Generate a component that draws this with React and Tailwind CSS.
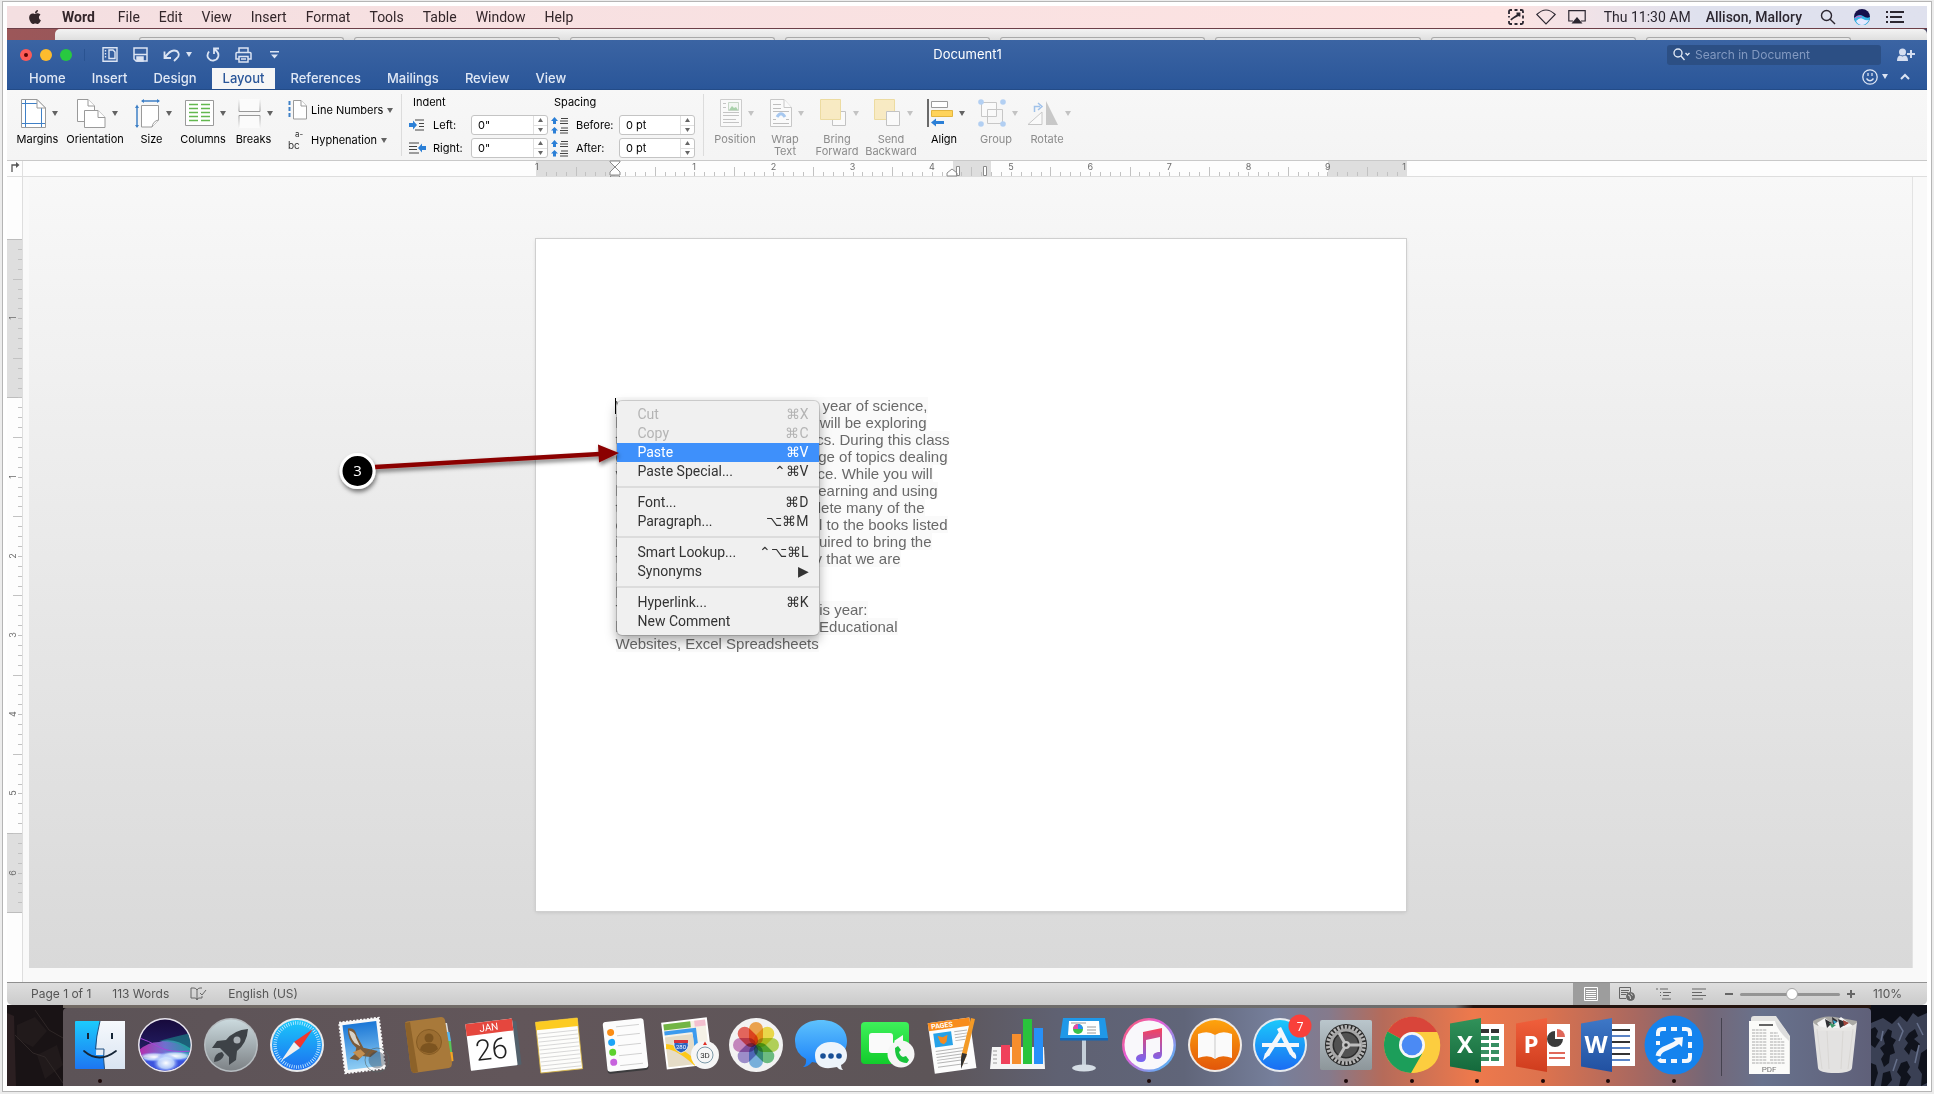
import React, { useState } from 'react';
import { FaApple } from 'react-icons/fa';

const menus = ['File', 'Edit', 'View', 'Insert', 'Format', 'Tools', 'Table', 'Window', 'Help'];
const ribbonTabs = ['Home', 'Insert', 'Design', 'Layout', 'References', 'Mailings', 'Review', 'View'];

const INCH = 79;

/* ── Menu bar ── */
const MenuBar = () => (
  <header className="flex h-[23px] items-center justify-between border-b border-[#6d3f48] bg-linear-to-r from-[#f4dfe1] via-[#fde3e2] via-78% to-[#dfe1ee] to-88% pr-[23px] pl-5 font-[Roboto,sans-serif] text-sm text-[#33262a]">
    <nav className="flex items-center gap-[19px]">
      <FaApple className="mb-px h-4 w-4" />
      <a href="#word" className="pr-1 font-bold">Word</a>
      {menus.map(m => <a key={m} href={`#${m}`}>{m}</a>)}
    </nav>
    <div className="flex items-center gap-3 text-[#2b2630]">
      <svg width="16" height="16" viewBox="0 0 16 16" fill="none" stroke="currentColor" strokeWidth="1.8">
        <path d="M1 5V2.500Q1 1 2.500 1H4M6.500 1h3M12 1h1.500Q15 1 15 2.500V4M15 6.500v3M15 12v1.500q0 1.500-1.500 1.500H12M9.500 15h-3M4 15H2.500Q1 15 1 13.500V12M1 7v1.500" />
        <path d="M3 11c1-2 5-3 8-6M8.500 4.500h3v3" />
      </svg>
      <svg width="20" height="16" viewBox="0 0 20 16" fill="none" stroke="currentColor" strokeWidth="1.100">
        <path d="M.8 5.500Q10-3.500 19.200 5.500L10 15z" />
      </svg>
      <svg width="18" height="16" viewBox="0 0 18 16" fill="none" stroke="currentColor" strokeWidth="1.200">
        <path d="M5 12H.8V1.600h16.400V12H13" />
        <path d="M9 8l5.500 6.500h-11z" fill="currentColor" stroke="none" />
      </svg>
      <span className="pl-[6px]">Thu 11:30 AM</span>
      <span className="pr-[6px] pl-[3px] font-medium">Allison, Mallory</span>
      <svg width="16" height="16" viewBox="0 0 16 16" fill="none" stroke="currentColor" strokeWidth="1.400">
        <circle cx="6.500" cy="6.500" r="5" /><path d="M10.200 10.200L15 15" />
      </svg>
      <svg width="26" height="16" viewBox="-6 0 26 16">
        <circle cx="8" cy="8" r="8" fill="#15104a" />
        <path d="M0 9q5-5 9-2t7 1a8 8 0 0 1-16 1z" fill="#37b7e6" />
        <path d="M2 12q4-4 7-2t6 1q-3 5-7 5t-6-4z" fill="#e6e8ff" />
        <path d="M1 9q3-3 7-1" stroke="#e255c8" fill="none" />
      </svg>
      <svg width="18" height="14" viewBox="0 0 18 14" stroke="currentColor" strokeWidth="1.800">
        <path d="M0 2h2M4 2h14M0 7h2M4 7h12M0 12h2M4 12h14" />
      </svg>
    </div>
  </header>
);

/* ── Title bar ── */
const TitleBar = () => (
  <div className="grid h-7 grid-cols-[1fr_auto_1fr] items-center pt-px pr-3 pl-[13px] text-white">
    <div className="flex items-center text-[#dbe4f3]">
      <div className="flex gap-2 border-r border-[#2a5391] pr-3">
        <button aria-label="Close" className="flex h-3 w-3 items-center justify-center rounded-full bg-[#fc5b57]"><span className="h-1 w-1 rounded-full bg-[#5a0503]" /></button>
        <button aria-label="Minimize" className="h-3 w-3 rounded-full bg-[#fdbc2e]" />
        <button aria-label="Zoom" className="h-3 w-3 rounded-full bg-[#28c940]" />
      </div>
      <button aria-label="Templates" className="ml-[17px]">
        <svg width="16" height="15" viewBox="0 0 16 15" fill="none" stroke="currentColor" strokeWidth="1.400">
          <path d="M1 .8h14v13.400H1zM7 3h4l2 2v6.500H7z" /><path d="M3.500 3v8" strokeDasharray="1.500 1.500" />
        </svg>
      </button>
      <button aria-label="Save" className="ml-[15px]">
        <svg width="15" height="15" viewBox="0 0 15 15" fill="none" stroke="currentColor" strokeWidth="1.500">
          <path d="M1 1h13v13H3l-2-2z" /><path d="M1 7.500h13" /><path d="M4 14v-4h6v4z" fill="currentColor" />
        </svg>
      </button>
      <button aria-label="Undo" className="ml-[15px]">
        <svg width="17" height="14" viewBox="0 0 17 14" fill="none" stroke="currentColor" strokeWidth="1.800">
          <path d="M1.500 3.500V10h6.500M2 9.500C5 5 8 2.500 11 2.500c5 0 6 5 3 7.500l-3 3" />
        </svg>
      </button>
      <Caret light className="ml-[6px]" />
      <button aria-label="Repeat" className="ml-[14px]">
        <svg width="14" height="15" viewBox="0 0 14 15" fill="none" stroke="currentColor" strokeWidth="1.800">
          <path d="M3 4.500C-1 10 4 14 7.500 13.500c5-.8 6.500-6 3-9.500L8.500 2.500M8 7V1.500h5" />
        </svg>
      </button>
      <button aria-label="Print" className="ml-[15px]">
        <svg width="17" height="16" viewBox="0 0 17 16" fill="none" stroke="currentColor" strokeWidth="1.500">
          <path d="M4 5V1h9v4M3.500 12H1V6.500q0-1 1-1h13q1 0 1 1V12h-2.500M4 9.500h9V15H4zM6 12h5" />
        </svg>
      </button>
      <button aria-label="Customize toolbar" className="ml-[18px]">
        <svg width="9" height="8" viewBox="0 0 9 8" fill="currentColor"><path d="M0 0h9v1.400H0zM1 3.500h7L4.500 7.500z" /></svg>
      </button>
    </div>
    <h1 className="pt-px text-[13px]">Document1</h1>
    <div className="flex items-center justify-end">
      <div className="flex h-5 w-[214px] items-center gap-1 rounded-[3px] bg-[#2c4f84] pl-[6px]">
        <svg width="18" height="13" viewBox="0 0 18 13" fill="none" stroke="#dfe7f4" strokeWidth="1.400">
          <circle cx="5" cy="5" r="4" /><path d="M8 8l3.500 4M12.500 5l2 2 2-2" />
        </svg>
        <input type="text" aria-label="Search in Document" placeholder="Search in Document" className="min-w-0 flex-1 bg-transparent text-xs text-white outline-none placeholder:text-[#8299c1]" />
      </div>
      <button aria-label="Share" className="ml-4">
        <svg width="18" height="14" viewBox="0 0 18 14" fill="#d5def0">
          <circle cx="5.500" cy="4" r="3.500" /><path d="M0 13q0-5 3-5.500l2.500 1L8 7.500q3 .5 3 5.500zM13 2h2v3h3v2h-3v3h-2V7h-3V5h3z" />
        </svg>
      </button>
    </div>
  </div>
);

const Caret = ({ light, faded, className = '' }) => (
  <svg width="6" height="5" viewBox="0 0 6 5" className={`shrink-0 ${className}`}>
    <path d="M0 0h6L3 5z" fill={light ? '#dbe4f3' : faded ? '#c3c3c3' : '#636363'} />
  </svg>
);

const TabRow = ({ tab, setTab }) => (
  <div className="flex h-[21px] justify-between pr-[17px] pl-[11px]">
    <nav className="flex gap-1">
      {ribbonTabs.map(t => (
        <button key={t} onClick={() => setTab(t)}
          className={t === tab ? 'bg-[#f6f6f6] px-[11px] text-[13px] font-medium text-[#2a5699]' : 'px-[11px] text-[13px] font-medium text-[#e0e8f5]'}>
          {t}
        </button>
      ))}
    </nav>
    <div className="flex items-center pb-1">
      <button aria-label="Feedback">
        <svg width="16" height="16" viewBox="0 0 16 16" fill="none" stroke="#dbe4f3" strokeWidth="1.300">
          <circle cx="8" cy="8" r="7.200" /><path d="M6 4v3M10 4v3M4.500 9.500q3.500 4.500 7 0" />
        </svg>
      </button>
      <Caret light className="ml-1" />
      <button aria-label="Collapse ribbon" className="ml-3">
        <svg width="10" height="7" viewBox="0 0 10 7" fill="none" stroke="#dbe4f3" strokeWidth="2"><path d="M1 6l4-4 4 4" /></svg>
      </button>
    </div>
  </div>
);

/* ── Ribbon icons ── */
const g = { fill: '#fff', stroke: '#9a9a9a', strokeWidth: 1 };

const ribbonIcons = {
  Margins: (
    <svg width="25" height="29" viewBox="0 0 25 29"><path d="M.5.500H16L24.500 9v19.500H.5z" {...g} /><path d="M4.500 1v27M20.500 9v19M1 4.500h15M1 24.500h23" stroke="#3f80c6" fill="none" /><path d="M16 .5V9h8.500z" {...g} /></svg>
  ),
  Orientation: (
    <svg width="29" height="29" viewBox="0 0 29 29"><path d="M.5.500H11L17.500 7v15.500H.5z" {...g} /><path d="M11 .5V7h6.500" {...g} />
      <path d="M7.500 11.500H21l7 7v10H7.500z" {...g} /><path d="M21 11.500v7h7" {...g} /></svg>
  ),
  Size: (
    <svg width="25" height="29" viewBox="0 0 25 29"><path d="M6.500 6.500h17V21l-6.500 7H6.500z" {...g} /><path d="M17 28q1-6 6.500-7" {...g} />
      <path d="M7 2h17M2 7v21" stroke="#3f80c6" strokeWidth="1.500" /><path d="M9 0v4L6 2zM22 0v4l3-2zM0 9h4L2 5.500zM0 26h4l-2 3z" fill="#3f80c6" /></svg>
  ),
  Columns: (
    <svg width="29" height="26" viewBox="0 0 29 26"><path d="M.5.500h28v25H.5z" {...g} />
      <path d="M4 4.500h9M4 8.500h9M4 12.500h9M4 16.500h9M4 20.500h9M16 4.500h9M16 8.500h9M16 12.500h9M16 16.500h9M16 20.500h9" stroke="#63b84f" strokeWidth="1.400" /></svg>
  ),
  Breaks: (
    <svg width="23" height="29" viewBox="0 0 23 29">
      <defs>
        <linearGradient id="fadeUp" x1="0" y1="0" x2="0" y2="1"><stop offset="0" stopColor="#999" stopOpacity="0" /><stop offset="1" stopColor="#999" /></linearGradient>
        <linearGradient id="fadeDown" x1="0" y1="0" x2="0" y2="1"><stop offset="0" stopColor="#999" /><stop offset="1" stopColor="#999" stopOpacity="0" /></linearGradient>
      </defs>
      <path d="M1 0v12.500h21V0" fill="#fbfbfb" stroke="url(#fadeUp)" /><path d="M1 29V16.500h21V29" fill="#fbfbfb" stroke="url(#fadeDown)" />
    </svg>
  ),
  Position: (
    <svg width="22" height="28" viewBox="0 0 22 28" opacity=".45"><path d="M.5.500h21v27H.5z" {...g} /><path d="M8.500 3.500h10v8h-10z" fill="#eef6ee" stroke="#8fb08f" /><path d="M9 11l3-4 2 2 2-1 2 3z" fill="#4ca650" />
      <path d="M3 4.500h3M3 8.500h3M3 13.500h16M3 16.500h16M3 20.500h13M3 23.500h16" stroke="#888" /></svg>
  ),
  Wrap: (
    <svg width="22" height="28" viewBox="0 0 22 28" opacity=".5"><path d="M.5.500H14l7.500 8v19H.5z" {...g} /><path d="M14 .5v8h7.500" {...g} />
      <path d="M3 5.500h8M3 9.500h8M3 12.500h16M3 20.500h3M16 20.500h3M3 24.500h16" stroke="#888" /><path d="M7 18q4-6.500 8 0" fill="none" stroke="#5b9bea" strokeWidth="3" /></svg>
  ),
  Forward: (
    <svg width="27" height="28" viewBox="0 0 27 28" opacity=".55"><path d="M12.500 12.500h13v14h-13z" {...g} /><path d="M.5.500h20v20H.5z" fill="#fae29a" stroke="#e5c65c" /></svg>
  ),
  Backward: (
    <svg width="27" height="28" viewBox="0 0 27 28" opacity=".55"><path d="M.5.500h20v20H.5z" fill="#fae29a" stroke="#e5c65c" /><path d="M12.500 12.500h13v14h-13z" {...g} /></svg>
  ),
  Align: (
    <svg width="26" height="28" viewBox="0 0 26 28"><path d="M0 0h2v28H0z" fill="#6a6a6a" /><path d="M4.500 2.500h16v6h-16z" {...g} /><path d="M4.500 11.500h21v6h-21z" fill="#ffd35a" stroke="#e3b53e" />
      <path d="M4 23.500l5-4v2.500h8v3H9v2.500z" fill="#2b7fd6" /></svg>
  ),
  Group: (
    <svg width="28" height="28" viewBox="0 0 28 28" opacity=".5"><path d="M3.500 3.500h15v14h-15z" {...g} /><path d="M9.500 10.500h15v14h-15z" fill="none" stroke="#9a9a9a" />
      <g fill="#71aaf0"><circle cx="3" cy="3" r="2.800" /><circle cx="25" cy="3" r="2.800" /><circle cx="3" cy="25" r="2.800" /><circle cx="25" cy="25" r="2.800" /></g></svg>
  ),
  Rotate: (
    <svg width="32" height="26" viewBox="0 0 32 26" opacity=".5"><path d="M1 24.500h14V12z" {...g} /><path d="M19 1v24h12z" fill="#9b9b9b" /><path d="M7.500 12V6.500H13M11 3l4 3.500-4 3.500" fill="none" stroke="#4c8fe0" strokeWidth="1.500" /></svg>
  ),
};

const layoutButtons = [
  { icon: 'Margins', label: 'Margins', width: 'w-[47px]' },
  { icon: 'Orientation', label: 'Orientation', width: 'w-[68px]' },
  { icon: 'Size', label: 'Size', width: 'w-[45px]' },
  { icon: 'Columns', label: 'Columns', width: 'w-[58px]' },
  { icon: 'Breaks', label: 'Breaks', width: 'w-[43px]' },
];

const arrangeButtons = [
  { icon: 'Position', label: 'Position', width: 'w-[50px]', faded: true },
  { icon: 'Wrap', label: 'Wrap Text', width: 'w-[50px]', faded: true },
  { icon: 'Forward', label: 'Bring Forward', width: 'w-[54px]', faded: true },
  { icon: 'Backward', label: 'Send Backward', width: 'w-[54px]', faded: true },
  { icon: 'Align', label: 'Align', width: 'w-[52px]' },
  { icon: 'Group', label: 'Group', width: 'w-[52px]', faded: true },
  { icon: 'Rotate', label: 'Rotate', width: 'w-[50px]', faded: true },
];

const RibbonButton = ({ icon, label, width, faded }) => (
  <button className={`flex flex-col items-center ${width}`}>
    <span className="flex h-8 items-center gap-[6px] pl-1">
      {ribbonIcons[icon]}
      <Caret faded={faded} />
    </span>
    <span className={`mt-1 text-[11px] leading-3 ${faded ? 'text-[#8b8b8b]' : 'text-black'}`}>{label}</span>
  </button>
);

const IndentIcon = ({ right }) => (
  <svg width="18" height="12" viewBox="0 0 18 12">
    {right
      ? <><path d="M0 1h10M0 4.500h8M0 7.500h8M0 11h10" stroke="#444" /><path d="M9 6l4-4.500v2.500h4v4h-4v2.500z" fill="#2b7fd6" /></>
      : <><path d="M6 1h9M10 4.500h5M10 7.500h5M6 11h9" stroke="#444" /><path d="M8 6L4 1.500v2.500H0v4h4v2.500z" fill="#2b7fd6" /></>}
  </svg>
);

const SpacingIcon = () => (
  <svg width="18" height="17" viewBox="0 0 18 17">
    <path d="M3.500 0L7 4H5v3H2V4H0zM3.500 10L7 13.500H5V16.500H2v-3H0z" fill="#2b7fd6" />
    <path d="M10 1.500h7M9 4h8M9 6.500h8M10 11h7M9 13.500h8M9 16h8" stroke="#444" />
  </svg>
);

const Stepper = ({ id, value }) => (
  <div className="flex h-5 rounded-[3px] border border-[#c4c4c4] bg-white">
    <input id={id} type="text" defaultValue={value} className="min-w-0 flex-1 pl-[6px] text-[11px] text-black outline-none" />
    <div className="flex w-[14px] flex-col divide-y divide-[#e0e0e0] border-l border-[#e0e0e0]">
      <button aria-label="Increase" className="flex flex-1 items-center justify-center"><svg width="5" height="4" viewBox="0 0 5 4"><path d="M0 4h5L2.500 0z" fill="#666" /></svg></button>
      <button aria-label="Decrease" className="flex flex-1 items-center justify-center"><svg width="5" height="4" viewBox="0 0 5 4"><path d="M0 0h5L2.500 4z" fill="#666" /></svg></button>
    </div>
  </div>
);

const Ribbon = () => (
  <section className="flex h-[70px] bg-linear-to-b from-[#f7f7f7] to-[#f4f4f4] text-[11px] text-black">
    <div className="flex items-start pt-[7px] pl-[7px]">
      {layoutButtons.map(b => <RibbonButton key={b.icon} {...b} />)}
    </div>
    <div className="flex w-[126px] flex-col gap-[10px] pt-[10px] pl-3">
      <button className="flex h-5 items-center gap-1 whitespace-nowrap">
        <svg width="20" height="20" viewBox="0 0 20 20" className="shrink-0"><path d="M6.500.500H14l5.500 5.500v13h-13z" {...g} /><path d="M14 .5V6h5.500" {...g} />
          <path d="M2.500 1v18" stroke="#3f80c6" strokeWidth="2" strokeDasharray="4 2" /></svg>
        Line Numbers <Caret />
      </button>
      <button className="flex h-5 items-center gap-1 whitespace-nowrap">
        <svg width="20" height="20" viewBox="0 0 20 20" className="shrink-0 overflow-visible" fontFamily="Inter, sans-serif" fill="#333"><text x="1" y="19" fontSize="10">bc</text><text x="8" y="7" fontSize="8">a-</text></svg>
        Hyphenation <Caret />
      </button>
    </div>
    <div className="my-1 w-px bg-[#dcdcdc]" />
    <div className="grid grid-cols-[24px_38px_77px] content-start items-center gap-y-[3px] pt-1 pl-[7px]">
      <span className="col-span-3 mb-px h-[17px] pl-1 leading-4">Indent</span>
      <IndentIcon /><label htmlFor="left">Left:</label><Stepper id="left" value={'0"'} />
      <IndentIcon right /><label htmlFor="right">Right:</label><Stepper id="right" value={'0"'} />
    </div>
    <div className="grid grid-cols-[25px_43px_76px] content-start items-center gap-y-[3px] pt-1 pl-[3px]">
      <span className="col-span-3 mb-px h-[17px] pl-[3px] leading-4">Spacing</span>
      <SpacingIcon /><label htmlFor="before">Before:</label><Stepper id="before" value="0 pt" />
      <SpacingIcon /><label htmlFor="after">After:</label><Stepper id="after" value="0 pt" />
    </div>
    <div className="my-1 ml-2 w-px bg-[#dcdcdc]" />
    <div className="flex items-start pt-[7px] pl-[6px]">
      {arrangeButtons.map(b => <RibbonButton key={b.icon} {...b} />)}
    </div>
  </section>
);

/* ── Rulers ── */
const HorizontalRuler = () => {
  const ticks = Array.from({ length: 88 }, (_, i) => i).filter(i => i % 8 !== 0 || i > 8);
  return (
    <svg width="871" height="22" viewBox="0 0 871 22" className="shrink-0 overflow-visible" fontFamily="Inter, sans-serif" fontSize="9" fill="#6b6b6b">
      <path d="M0 0h79v15H0zM417 0h38v15h-38zM792 0h79v15h-79z" fill="#dedede" />
      {ticks.map(i => (
        <path key={i} d={`M${Math.round(i * INCH * 11.02 / 88) + 0.5} ${i % 8 === 4 ? 6 : 11}V15`} stroke="#c2c2c2" />
      ))}
      {[1.5, 2, 2.5, 3, 3.5, 4, 4.5, 5].map(n => <path key={n} d={`M${Math.round(n * 79.100)}.500 16v3`} stroke="#8a8a8a" />)}
      <text x="-1" y="9">1</text>
      {[1, 2, 3, 4, 5, 6, 7, 8, 9].map(n => <text key={n} x={79 + n * 79.200} y="9" textAnchor="middle">{n}</text>)}
      <text x="870" y="9" textAnchor="end">1</text>
      <g fill="#fff" stroke="#8a8a8a">
        <path d="M74 0h10v1l-5 5-5-5z" /><path d="M74 14v-3l5-5 5 5v3zM74.500 15h9v5h-9z" />
        <path d="M411 15v-3l5-4 5 4v3zM420.500 5.500h3v9h-3zM447.500 5.500h3v9h-3z" />
      </g>
    </svg>
  );
};

const VerticalRuler = () => (
  <svg width="15" height="674" viewBox="0 0 15 674" fontFamily="Inter, sans-serif" fontSize="9" fill="#6b6b6b">
    <path d="M0 0h15v158H0zM0 594h15v79H0z" fill="#dedede" />
    <path d="M0 .5h15M0 158.500h15M0 594.500h15M0 673.500h15" stroke="#bdbdbd" />
    {Array.from({ length: 67 }, (_, i) => i + 1).map(i => (
      <path key={i} d={`M${i % 8 === 4 ? 6 : 11} ${Math.round(i * 9.900)}.500H15`} stroke="#c2c2c2" />
    ))}
    {[[1, 79], [1, 238], [2, 317], [3, 396], [4, 475], [5, 554], [6, 634]].map(([n, y]) => (
      <text key={y} transform={`translate(9 ${y}) rotate(-90)`} textAnchor="middle">{n}</text>
    ))}
  </svg>
);

/* ── Context menu ── */
const menuGroups = [
  [['Cut', '⌘X', true], ['Copy', '⌘C', true], ['Paste', '⌘V'], ['Paste Special...', '⌃⌘V']],
  [['Font...', '⌘D'], ['Paragraph...', '⌥⌘M']],
  [['Smart Lookup...', '⌃⌥⌘L'], ['Synonyms', '▶']],
  [['Hyperlink...', '⌘K'], ['New Comment', '']],
];

const ContextMenu = () => (
  <div role="menu" className="absolute top-[162px] left-[81px] w-[202px] divide-y-2 divide-[#dcdcdc] rounded-[5px] bg-[#f0f0f0] py-1 font-[Roboto,sans-serif] text-sm shadow-[0_0_0_1px_rgba(0,0,0,0.14),0_5px_12px_rgba(0,0,0,0.35)]">
    {menuGroups.map((group, i) => (
      <div key={i} className={i === 0 ? 'pb-[5px]' : i === 3 ? 'pt-[5px]' : 'py-[5px]'}>
        {group.map(([label, keys, disabled]) => (
          <button key={label} role="menuitem" disabled={disabled}
            className={`flex h-[19px] w-full items-center justify-between pr-[10px] pb-[2px] pl-[21px] ${label === 'Paste' ? 'bg-[#3e90fb] text-white' : disabled ? 'text-[#b4b4b4]' : 'text-[#333]'}`}>
            <span>{label}</span>
            <span>{keys}</span>
          </button>
        ))}
      </div>
    ))}
  </div>
);

const lines = [
  ['W', 'year of science,', 'w-[312px]'],
  ['l', 'will be exploring', 'w-[311px]'],
  ['t', 'cs. During this class', 'w-[334px]'],
  ['g', 'ge of topics dealing', 'w-[332px]'],
  ['v', 'ce. While you will', 'w-[317px]'],
  ['l', 'earning and using', 'w-[322px]'],
  ['t', 'lete many of the', 'w-[309px]'],
  ['c', 'l to the books listed', 'w-[332px]'],
  ['i', 'uired to bring the', 'w-[316px]'],
  ['t', 'y that we are', 'w-[285px]'],
  ['r', '', 'w-[120px]'],
  ['l', '', 'w-[120px]'],
  ['T', 'is year:', 'w-[252px]'],
  ['l', 'Educational', 'w-[282px]'],
];

const Page = () => (
  <article className="relative mt-[62px] h-[672px] w-[870px] shrink-0 bg-white pt-[158px] pl-20 shadow-[0_0_0_1px_#cfcfcf,0_1px_4px_rgba(0,0,0,0.15)]">
    <div className="font-['Liberation_Sans',Arial,sans-serif] text-[15px] leading-[17px] text-[#696969]">
      {lines.map(([lead, tail, width], i) => (
        <p key={i} className={`flex justify-between bg-[#fafafa] whitespace-nowrap ${width}`}><span>{lead}</span><span>{tail}</span></p>
      ))}
      <p className="w-fit bg-[#fafafa]">Websites, Excel Spreadsheets</p>
    </div>
    <span className="absolute top-[159px] left-[79px] h-4 w-px bg-black" />
    <ContextMenu />
    <svg width="290" height="60" viewBox="0 0 290 60" className="absolute top-[201px] left-[-201px]">
      <defs>
        <filter id="drop" x="-20%" y="-50%" width="140%" height="220%"><feDropShadow dx="1" dy="3" stdDeviation="2" floodOpacity=".5" /></filter>
      </defs>
      <g filter="url(#drop)">
        <path d="M40 27L265 14" stroke="#8b0000" strokeWidth="4.500" />
        <path d="M284 13L263 4.500l1 18z" fill="#8b0000" />
        <circle cx="22.500" cy="31" r="16.500" fill="#000" stroke="#fff" strokeWidth="3" />
      </g>
      <text x="22.500" y="36" textAnchor="middle" fontFamily="'Open Sans', sans-serif" fontSize="15" fill="#fff">3</text>
    </svg>
  </article>
);

const Workspace = () => (
  <main className="flex min-h-0 flex-1 flex-col bg-[#fdfdfd]">
    <div className="flex h-[17px] border-t border-b border-t-[#c9c9c9] border-b-[#dedede]">
      <div className="w-4 shrink-0 border-r border-[#e0e0e0] pl-1">
        <svg width="9" height="12" viewBox="0 0 9 12" fill="none" stroke="#555" strokeWidth="1.300"><path d="M1 11V4h5" /><path d="M5 1l3.500 3L5 7z" fill="#555" stroke="none" /></svg>
      </div>
      <div className="flex flex-1 justify-center pr-[14px] pl-[6px]"><HorizontalRuler /></div>
    </div>
    <div className="flex min-h-0 flex-1">
      <div className="w-4 shrink-0 border-r border-[#dedede] pt-[62px]"><VerticalRuler /></div>
      <div className="flex min-w-0 flex-1 flex-col bg-[#f9f9f9]">
        <div className="mr-[14px] ml-[6px] flex flex-1 justify-center border-r border-[#e3e3e3] bg-linear-to-b from-[#f8f8f8] to-[#d9d9d9] pb-10">
          <Page />
        </div>
        <div className="h-[14px]" />
      </div>
    </div>
  </main>
);

/* ── Status bar ── */
const StatusBar = () => (
  <div className="flex h-[23px] items-center justify-between border-t border-[#8f8f8f] bg-linear-to-b from-[#dedede] to-[#cbcbcb] pr-[25px] pl-6 text-xs text-[#555]">
    <div className="flex items-center gap-[21px]">
      <span>Page 1 of 1</span>
      <span>113 Words</span>
      <svg width="17" height="14" viewBox="0 0 17 14" fill="none" stroke="#666"><path d="M7 13V3Q6 1 4 1H1v10h4q2 0 2 2 0-2 2-2h3V9M7 3q1-2 3-2h2M10 6l2 2 4-5" /></svg>
      <span>English (US)</span>
    </div>
    <div className="flex h-full items-center">
      <button aria-label="Print layout" className="flex h-full w-[37px] items-center justify-center bg-[#9d9d9d]">
        <svg width="14" height="14" viewBox="0 0 14 14" fill="none" stroke="#fff"><path d="M.5.500h13v13H.5zM2 3.500h10M2 5.500h10M2 7.500h10M2 9.500h10M2 11.500h10" /></svg>
      </button>
      <button aria-label="Web layout" className="ml-[9px]">
        <svg width="16" height="14" viewBox="0 0 16 14" fill="none" stroke="#666"><path d="M7 11.500H.5V.5h11V5M2 3.500h8M2 5.500h7M2 7.500h5" /><circle cx="11.500" cy="9.500" r="4" fill="#666" /><path d="M9 8l2 1 .5 3M12 6.500l1.500 2" stroke="#ddd" /></svg>
      </button>
      <button aria-label="Outline" className="ml-[21px]">
        <svg width="15" height="12" viewBox="0 0 15 12" stroke="#666" strokeWidth="1.200"><path d="M0 1h2M4 1h8M4 4.500h1M7 4.500h8M4 7.500h1M7 7.500h6M6 11h9" /></svg>
      </button>
      <button aria-label="Draft" className="ml-[21px]">
        <svg width="14" height="12" viewBox="0 0 14 12" stroke="#666" strokeWidth="1.200"><path d="M0 1h14M0 4.500h10M0 7.500h14M0 11h11" /></svg>
      </button>
      <button aria-label="Zoom out" className="ml-[19px] h-[2px] w-2 bg-[#666]" />
      <input type="range" aria-label="Zoom" min="0" max="100" defaultValue="52"
        className="mx-[7px] h-[3px] w-[100px] appearance-none rounded-full bg-[#949494] [&::-webkit-slider-thumb]:h-3 [&::-webkit-slider-thumb]:w-3 [&::-webkit-slider-thumb]:appearance-none [&::-webkit-slider-thumb]:rounded-full [&::-webkit-slider-thumb]:border [&::-webkit-slider-thumb]:border-[#a5a5a5] [&::-webkit-slider-thumb]:bg-white" />
      <button aria-label="Zoom in"><svg width="8" height="8" viewBox="0 0 8 8" stroke="#666" strokeWidth="2"><path d="M0 4h8M4 0v8" /></svg></button>
      <span className="ml-[18px]">110%</span>
    </div>
  </div>
);

/* ── Dock ── */
const grad = (id, a, b) => (
  <linearGradient id={id} x1="0" y1="0" x2="0" y2="1"><stop offset="0" stopColor={a} /><stop offset="1" stopColor={b} /></linearGradient>
);

const officeIcon = (letter, id, a, b, sheet) => (
  <>
    <defs>{grad(id, a, b)}</defs>
    <path d="M26 9h31v42H26z" fill="#fff" />
    {sheet}
    <path d="M3 8.500L34 3v54L3 51.500z" fill={`url(#${id})`} />
    <text x="18" y="38" textAnchor="middle" fontFamily="'Open Sans', sans-serif" fontWeight="700" fontSize="24" fill="#fff">{letter}</text>
  </>
);

const petals = ['#f7a13d', '#f5e03a', '#b3d64b', '#63bf7a', '#6fb2e4', '#9a8ad0', '#c97fc0', '#ee5a50'];

const dockApps = [
  { name: 'Finder', running: true, art: (
    <><defs>{grad('fa', '#1ccbfd', '#1d76f2')}{grad('fb', '#f6f9fd', '#d9e4f1')}</defs>
      <rect x="5" y="6" width="50" height="48" rx="1" fill="url(#fa)" /><path d="M30 6h25v48H34.500q-1-8-.5-14h-8q0-20 4-34z" fill="url(#fb)" />
      <path d="M30 6q-4 16-4.500 28H34q-1 10 .5 20" fill="none" stroke="#1f4f80" /><path d="M14 36q15 13 32 0" fill="none" stroke="#152536" strokeWidth="1.700" strokeLinecap="round" /><path d="M18 18v6M42 18v6" stroke="#152536" strokeWidth="2" /></>
  ) },
  { name: 'Siri', art: (
    <><defs>{grad('sa', '#170a3c', '#2a2a7c')}<clipPath id="sc"><circle cx="30" cy="30" r="25.500" /></clipPath>
      <linearGradient id="sw" x1="0" x2="1"><stop offset="0" stopColor="#f02ac0" /><stop offset=".5" stopColor="#8a8cf5" /><stop offset="1" stopColor="#19c6b0" /></linearGradient>
      <radialGradient id="sl"><stop offset="0" stopColor="#fff" /><stop offset=".6" stopColor="#cfe6ff" stopOpacity=".8" /><stop offset="1" stopColor="#6f8cff" stopOpacity="0" /></radialGradient></defs>
      <circle cx="30" cy="30" r="27" fill="#e9e6ee" /><circle cx="30" cy="30" r="25.500" fill="url(#sa)" />
      <g clipPath="url(#sc)"><path d="M2 37q10-10 22-10 14-6 34 8v8q-14 6-28 2T2 42z" fill="url(#sw)" opacity=".75" />
        <path d="M2 22q12 4 22 10T58 36" stroke="#a445d8" fill="none" /><path d="M24 26q14-4 32-8v18q-12-10-32-10z" fill="#17a79a" opacity=".5" />
        <path d="M2 43h56v16H2z" fill="#3f5cf0" opacity=".85" /><ellipse cx="19" cy="42" rx="17" ry="5" fill="url(#sl)" /><ellipse cx="40" cy="41" rx="18" ry="5" fill="url(#sl)" /><ellipse cx="31" cy="48" rx="13" ry="9" fill="url(#sl)" /></g></>
  ) },
  { name: 'Launchpad', art: (
    <><defs>{grad('la', '#cbdade', '#7d8286')}</defs><circle cx="30" cy="30" r="27" fill="#b7bdc1" /><circle cx="30" cy="30" r="25.500" fill="url(#la)" />
      <path d="M47 14q-14 1-22 11l-9 1-5 7 8 0 9 9v8l7-5 1-9q10-8 11-22z" fill="#3d4247" /><circle cx="36" cy="25" r="3.500" fill="#a9b0b5" /><path d="M21 37q-8 1-8 10 8-1 10-7z" fill="#3d4247" /></>
  ) },
  { name: 'Safari', art: (
    <><defs>{grad('va', '#1ac8fb', '#1d6ff0')}</defs><circle cx="30" cy="30" r="27" fill="#e8eaec" /><circle cx="30" cy="30" r="25" fill="url(#va)" />
      <circle cx="30" cy="30" r="22" fill="none" stroke="#c9ecff" strokeWidth="3.500" strokeDasharray=".8 1.500" /><path d="M46 14L27 27l6 6z" fill="#f0372f" /><path d="M14 46l13-19 6 6z" fill="#f0f0f0" /></>
  ) },
  { name: 'Mail', art: (
    <><defs>{grad('ma', '#1b77d6', '#8fcdf3')}</defs>
      <g transform="rotate(-7 30 30)"><rect x="10" y="5" width="40" height="51" fill="#f8f8f8" stroke="#f8f8f8" strokeWidth="2" strokeDasharray="2 1.500" /><rect x="13" y="8" width="34" height="45" fill="url(#ma)" />
        <path d="M18 12q7-1 8 8l5 13 14 5-8 5-8-2-5 4-8-3 6-4 2-6q-8-8-6-20z" fill="#7b5b3a" /><path d="M19 14q6 2 6 8l3 9-5-4q-4-6-4-13z" fill="#d8d2c8" /><path d="M20 36l8-2 4 5-6 4z" fill="#c48f50" /></g>
      <circle cx="45" cy="45" r="12" fill="none" stroke="#566" opacity=".6" /><circle cx="45" cy="45" r="8.500" fill="#345" opacity=".4" /></>
  ) },
  { name: 'Contacts', art: (
    <><path d="M46 8h3l2 12h-4z" fill="#dedede" /><path d="M48 17h3.500l1.500 9h-4z" fill="#59b7f0" /><path d="M50 26h3l1 11h-4z" fill="#59c559" /><path d="M51 37h3.500l1 9-5 1z" fill="#f5a623" />
      <path d="M7 8q0-1 2-1.500L43 2q3 0 4 3l7 43q0 4-3 5l-35 5q-2 0-3-3z" fill="#a8793a" /><path d="M7 8l5-1 8 50-4 1q-2 0-3-3z" fill="#8d6229" />
      <circle cx="31" cy="27" r="12.500" fill="#9b6d31" stroke="#855b24" /><circle cx="31" cy="23" r="4.500" fill="#7c5420" /><path d="M22 35q1-7 9-7t9 6q-8 8-18 1z" fill="#7c5420" /></>
  ) },
  { name: 'Calendar', art: (
    <><g transform="rotate(-7 30 30)"><rect x="9" y="9" width="47" height="44" rx="1" fill="#53616c" /><rect x="5" y="6" width="47" height="47" rx="1" fill="#fff" /><path d="M5 6h47v12H5z" fill="#e5473e" />
      <text x="28" y="15.500" textAnchor="middle" fontFamily="Roboto, sans-serif" fontSize="10" fill="#fff">JAN</text><text x="28" y="44" textAnchor="middle" fontFamily="Roboto, sans-serif" fontWeight="300" fontSize="29" fill="#222">26</text></g></>
  ) },
  { name: 'Notes', art: (
    <g transform="rotate(-6 30 30)"><rect x="9" y="5" width="42" height="51" fill="#fdfdfb" stroke="#d6b341" strokeWidth=".8" /><path d="M9 5h42v8H9z" fill="#fccb22" />
      <path d="M10 17h40M10 21h40M10 25h40M10 29h40M10 33h40M10 37h40M10 41h40M10 45h40M10 49h40M10 53h40" stroke="#d0d0d0" strokeWidth=".8" /></g>
  ) },
  { name: 'Reminders', art: (
    <g transform="rotate(-6 30 30)"><rect x="10" y="7" width="41" height="50" rx="3" fill="#3b3b3d" /><rect x="10" y="5" width="41" height="50" rx="3" fill="#fcfcfc" />
      <circle cx="17" cy="16" r="3.500" fill="#fb8d15" /><circle cx="17" cy="26" r="3.500" fill="#1ba4f7" /><circle cx="17" cy="36" r="3.500" fill="#5ed22f" /><circle cx="17" cy="46" r="3.500" fill="#c762dd" /><path d="M23 11h23M23 20h23M23 30h23M23 40h23M23 50h23" stroke="#c9c9c9" strokeWidth=".8" /></g>
  ) },
  { name: 'Maps', art: (
    <><g transform="rotate(-7 26 30)"><rect x="5" y="6" width="44" height="45" fill="#f5f1e6" stroke="#fff" strokeWidth="2" /><path d="M6 7h27v6H6z" fill="#72b545" /><path d="M37 7h11v6H37z" fill="#f3c0cf" /><path d="M6 16h30v34" stroke="#3c9bee" strokeWidth="4" fill="none" /><path d="M6 20h28v30H6z" fill="#e5dcc7" /><path d="M6 29q12 2 28 21" stroke="#fdc81a" strokeWidth="5" fill="none" /></g>
      <path d="M14 27q7 2 14 0 2 8-7 11-8-3-7-11z" fill="#2b63c0" stroke="#fff" strokeWidth=".7" /><path d="M14 25h14v3H14z" fill="#d6343c" /><text x="21" y="34" textAnchor="middle" fontSize="6" fontFamily="Roboto, sans-serif" fill="#fff">280</text>
      <circle cx="45" cy="40" r="14" fill="#f6f6f6" /><circle cx="45" cy="40" r="8" fill="none" stroke="#7b99a8" /><text x="45" y="43" textAnchor="middle" fontSize="8" fontFamily="Roboto, sans-serif" fill="#333">3D</text><path d="M43 30h4l-2-3.500z" fill="#e03127" /></>
  ) },
  { name: 'Photos', art: (
    <><circle cx="30" cy="30" r="27" fill="#f2f2f2" />{petals.map((c, i) => <rect key={c} x="23" y="7" width="14" height="23" rx="7" fill={c} opacity=".9" transform={`rotate(${i * 45} 30 30)`} className="mix-blend-multiply" />)}</>
  ) },
  { name: 'Messages', art: (
    <><defs>{grad('sm', '#5ec2fd', '#1a80f9')}</defs><path d="M30 5c16 0 26 9 26 21S46 48 30 48q-5 0-9-1-4 5-9 5 4-3 3-8Q4 38 4 26C4 14 14 5 30 5z" fill="url(#sm)" />
      <path d="M40 27c10 0 16 6 16 13 0 5-2 8-6 10q0 3 2 5-4 0-6-3-22 5-22-12c0-7 6-13 16-13z" fill="#edf4fb" /><g fill="#174f96"><circle cx="32" cy="41" r="2.800" /><circle cx="40" cy="41" r="2.800" /><circle cx="48" cy="41" r="2.800" /></g></>
  ) },
  { name: 'FaceTime', art: (
    <><defs>{grad('ft', '#3ef15a', '#12cc2c')}</defs><rect x="4" y="7" width="48" height="42" rx="4" fill="url(#ft)" /><rect x="12" y="18" width="24" height="20" rx="3" fill="#fafafa" /><path d="M37 26l9-6v16z" fill="#fafafa" />
      <circle cx="44" cy="39" r="13.500" fill="#f6f6f6" /><path d="M38 33l3-2 3 4-2 2q1 4 4 5l3-1 3 4-2 3q-12 0-12-15z" fill="#19c53c" /></>
  ) },
  { name: 'Pages', art: (
    <><g transform="rotate(-8 30 30)"><rect x="8" y="5" width="42" height="51" fill="#fcfcfc" /><path d="M8 5h42v8H8z" fill="#f88c1c" /><text x="11" y="11.500" fontFamily="Roboto, sans-serif" fontWeight="700" fontSize="7" fill="#fff">PAGES</text><rect x="12" y="16" width="18" height="14" fill="#27a2e8" /><path d="M16 19l5 2 5-2-2 7-3 2-3-2z" fill="#f58b21" />
      <path d="M33 17h13M33 20h13M33 23h13M33 26h10M12 34h28M12 37h30M12 40h25M12 43h30M12 46h26M12 50h30" stroke="#b5b5b5" /></g><path d="M48 3l4 1-9 38-4 9-1-9z" fill="#f39a26" /><path d="M39 38l5 1-6 15 0-10z" fill="#333" /></>
  ) },
  { name: 'Numbers', art: (
    <><path d="M4 32h52l1 22H2z" fill="#f5f5f5" /><path d="M5 36h4M5 40h4M5 44h4M5 48h4" stroke="#999" /><rect x="13" y="30" width="9" height="19" fill="#f0415b" /><rect x="24" y="19" width="9" height="30" fill="#f68e2d" /><rect x="35" y="4" width="9" height="45" fill="#29c33c" /><rect x="46" y="13" width="9" height="36" fill="#2790f8" /></>
  ) },
  { name: 'Keynote', art: (
    <><path d="M28 24h4v30h-4z" fill="#c4ced8" /><ellipse cx="30" cy="53" rx="12" ry="3.500" fill="#d5dde5" /><path d="M9 3h42l3 20H6z" fill="#1f98e8" /><path d="M6 23h48v2.500H6z" fill="#1268b8" /><path d="M15 6h30l1 14H14z" fill="#fff" /><circle cx="24" cy="14" r="5" fill="#3ac04c" /><path d="M24 14V9a5 5 0 0 1 5 5z" fill="#2790f8" /><path d="M24 14h-5a5 5 0 0 1 5-5z" fill="#e748a8" /><path d="M33 12h9M33 15h9M33 18h9M17 8h15" stroke="#999" /></>
  ) },
  { name: 'iTunes', running: true, art: (
    <><defs><linearGradient id="it" x1="0" y1="0" x2="1" y2="1"><stop offset="0" stopColor="#fb5c5c" /><stop offset=".4" stopColor="#e55fd9" /><stop offset="1" stopColor="#35c8fb" /></linearGradient>{grad('in', '#f8415b', '#7465f6')}</defs>
      <circle cx="30" cy="30" r="27" fill="url(#it)" /><circle cx="30" cy="30" r="24.500" fill="#f9f8fb" /><path d="M24 17l19-4v26q0 5-5 5-4 0-4-3t5-4h2V22l-14 3v17q0 5-5 5-5 0-5-3.500t5-4.500h2z" fill="url(#in)" /></>
  ) },
  { name: 'iBooks', art: (
    <><defs>{grad('ib', '#fea30c', '#e2560a')}</defs><circle cx="30" cy="30" r="27" fill="#efebe8" /><circle cx="30" cy="30" r="25" fill="url(#ib)" /><path d="M30 20q-7-5-17-1v24q11-4 17 1 6-5 17-1V19q-10-4-17 1z" fill="#fafafa" /><path d="M30 20v24" stroke="#c9c9c9" /></>
  ) },
  { name: 'App Store', art: (
    <><defs>{grad('as', '#1bc8fb', '#1b6df3')}</defs><circle cx="30" cy="30" r="27" fill="#e7ebef" /><circle cx="30" cy="30" r="25" fill="url(#as)" /><path d="M12 30h37" stroke="#f3f7fb" strokeWidth="4" /><path d="M29 13l13 26M31 18L17 40" stroke="#f3f7fb" strokeWidth="4.500" /><path d="M15 38l4 2.500-6 5zM40 39l4-2q3 3 2 7-4-1-6-5z" fill="#f3f7fb" />
      <circle cx="50" cy="11" r="11.500" fill="#f9403b" /><text x="50" y="15.500" textAnchor="middle" fontFamily="Roboto, sans-serif" fontSize="12" fill="#fff">7</text></>
  ) },
  { name: 'System Preferences', running: true, art: (
    <><defs>{grad('sp', '#bac6cc', '#8d969a')}</defs><rect x="4" y="5" width="52" height="50" rx="2" fill="url(#sp)" /><circle cx="30" cy="30" r="21" fill="#2b2b2b" /><circle cx="30" cy="30" r="18" fill="none" stroke="#b7b7b7" strokeWidth="4" strokeDasharray="2.300 1.470" /><circle cx="30" cy="30" r="15" fill="none" stroke="#a5a5a5" strokeWidth="3" /><circle cx="30" cy="30" r="12" fill="#515151" /><path d="M30 30l-7-12M30 30l-7 12M30 30h15" stroke="#bdbdbd" strokeWidth="3" /><circle cx="30" cy="30" r="4" fill="#c4c4c4" /><circle cx="30" cy="30" r="1.800" fill="#333" /></>
  ) },
  { name: 'Chrome', running: true, art: (
    <><circle cx="30" cy="30" r="28" fill="#fccd3f" /><path d="M30 30L5.500 16.500A28 28 0 0 1 55 17z" fill="#d9453a" /><path d="M5.500 16.500A28 28 0 0 0 29 58l11-19-10-9z" fill="#1c9e5a" /><path d="M30 17h25q4 8 3 17-2 22-28 24l11-20z" fill="#fccd3f" /><circle cx="30" cy="30" r="13" fill="#f7f7f7" /><circle cx="30" cy="30" r="10.300" fill="#4b8af4" /></>
  ) },
  { name: 'Excel', running: true, art: officeIcon('X', 'xl', '#31925a', '#14693c', <><path d="M34 14h8v4h-8zM44 14h8v4h-8z" fill="#333" /><path d="M34 21h8v4h-8zM44 21h8v4h-8zM34 28h8v4h-8zM44 28h8v4h-8zM34 35h8v4h-8zM44 35h8v4h-8zM34 42h8v4h-8zM44 42h8v4h-8z" fill="#378f62" /></>) },
  { name: 'PowerPoint', running: true, art: officeIcon('P', 'pp', '#f0603c', '#cf3c1d', <><path d="M42 16a8 8 0 1 0 8 8h-8z" fill="#3b3b3b" /><path d="M44 14a8 8 0 0 1 8 8h-8z" fill="#e0685a" /><path d="M36 38h16M36 43h16" stroke="#e0685a" strokeWidth="2" /></>) },
  { name: 'Word', running: true, art: officeIcon('W', 'wd', '#3e78c7', '#2150a0', <><path d="M34 15h18M34 27h18M34 39h18" stroke="#333" strokeWidth="2" /><path d="M34 21h18M34 33h18M34 45h18" stroke="#5a84c6" strokeWidth="2" /></>) },
  { name: 'ScreenSteps', running: true, art: (
    <><circle cx="30" cy="30" r="29.500" fill="#1483ee" /><g fill="none" stroke="#f5f8fc" strokeWidth="4"><path d="M14 21v-3q0-4 4-4h4M27 14h6M38 14h4q4 0 4 4v3M46 27v6M46 38v4q0 4-4 4h-4M33 46h-6M22 46h-4q-2 0-3-2M14 26v4" /><path d="M14 41c2-9 12-7 21-15" strokeWidth="5" /></g><path d="M29 23l10-1-1 10z" fill="#f5f8fc" /></>
  ) },
];

const dockFiles = [
  { name: 'Document', art: (
    <><path d="M12 4q0-3 3-3h22l14 20v38H12z" fill="#e3e3e1" /><path d="M10 6h26q8 8 14 20v33H10z" fill="#fbfbf9" /><path d="M36 6q2 9 14 20-1-14-14-20z" fill="#ddd" />
      <path d="M20 10h14" stroke="#333" strokeWidth="1.500" /><path d="M13 15h15M13 18h15M13 21h15M13 24h15M13 27h15M13 30h15M13 33h15M13 36h15M13 39h15M13 42h15M13 45h15M31 18h8M31 21h9M31 24h12M31 27h15M31 30h15M31 33h15M31 36h15M31 39h15M31 42h15M31 45h15M13 48h33" stroke="#a9a9a9" strokeDasharray="3 .7" />
      <text x="30" y="57" textAnchor="middle" fontFamily="Roboto, sans-serif" fontSize="8" fill="#777">PDF</text></>
  ) },
  { name: 'Trash', art: (
    <><path d="M8 6q10-6 22-4t22 4l-2 10H10z" fill="#a9a8a4" /><path d="M12 8l8-5 8 6 8-7 8 6 4 3-8 4H16z" fill="#f4f4f4" />
      <path d="M8 7q4 6 22 6t22-6l-5 46q-1 5-17 5t-17-5z" fill="#e8e7e5" opacity=".96" /><path d="M20 4l7 4-5 5zM33 4l10 4-8 5zM27 2l6 4-5 4z" fill="#2f2f33" /><path d="M24 8l7 2-4 3z" fill="#3c9a6b" /><path d="M38 5l6 3-5 3z" fill="#a2453c" /><path d="M28 5l4 2-3 2z" fill="#35a8cf" /><path d="M12 14l5 40M22 16l2 38M38 16l-2 38M48 14l-5 40" stroke="#d9d7d4" fill="none" /></>
  ) },
];

const DockItem = ({ app }) => (
  <button aria-label={app.name} className="flex flex-1 flex-col items-center gap-1 pt-[7px]">
    <svg width="60" height="60" viewBox="0 0 60 60" className="overflow-visible">{app.art}</svg>
    {app.running && <span className="h-1 w-1 rounded-full bg-[#1c0808]" />}
  </button>
);

const Dock = () => (
  <footer className="flex h-[81px] bg-[#120e10]">
    <svg className="h-full w-14 shrink-0" viewBox="0 0 56 81" preserveAspectRatio="none">
      <path d="M0 0h56v81H0z" fill="#191315" /><path d="M0 8l7 3 2 70H0z" fill="#2b1f21" /><path d="M10 20l18-8 12 14-14 16-16-8zM30 50l20-10 6 20-18 14z" fill="#211a1b" /><path d="M8 30l18 18 12 4 18 26M28 5l14 20 14 8" stroke="#2f2727" fill="none" />
    </svg>
    <div className="flex min-w-0 flex-1 flex-col">
      <div className="h-[3px] bg-linear-to-r from-[#726a64] via-[#6d6d6d] via-77% to-[#24140f] to-78%" />
      <div className="flex flex-1 rounded-t bg-[linear-gradient(90deg,#5c5357_0%,#62565a_25%,#5d5558_48%,#5f6172_55%,#606579_62%,#767f9b_67%,#857a8c_70%,#b56b5a_73%,#ee794c_78%,#dc724e_82%,#a86860_87%,#746777_91%,#68728d_94%,#5f6079_100%)] pr-[3px] pl-1">
        <div className="flex flex-1">{dockApps.map(a => <DockItem key={a.name} app={a} />)}</div>
        <div className="mx-[14px] mt-[10px] h-[58px] w-px bg-[#45424f]" />
        <div className="flex w-[132px]">{dockFiles.map(a => <DockItem key={a.name} app={a} />)}</div>
      </div>
    </div>
    <svg className="h-full w-14 shrink-0" viewBox="0 0 56 81" preserveAspectRatio="none">
      <path d="M0 0h56v81H0z" fill="#3a4054" /><path d="M0 0h56v8l-9 4-5-4-6 9-7-6-8 8-9-6L0 18z" fill="#0d0f18" />
      <path d="M4 22l3 4-2 6 4 3-5 8-4-3V24zM17 24l4 2-1 6 5 3-3 5 2 8-5 2-1 8-5 4-3-8 3-5-4-6 5-4-2-7zM38 28l6-4 3 7-4 3 6 5-4 8-5-3-2 6-5-6 4-6-3-4zM30 58l6-2 3 6-3 5 4 5-5 9h-7l2-9-4-5zM50 48l6-4v34l-6 3 1-12-4-6zM0 58l5 2 2 8-4 13H0zM12 68l7-2 2 9-5 6h-6z" fill="#10131d" />
      <path d="M27 18l5 8-4 10M12 26l-2 10M46 18l6 12M22 66l4-12M48 40l-4 18" stroke="#66708b" fill="none" strokeWidth="1.500" />
    </svg>
  </footer>
);

const App = () => {
  const [tab, setTab] = useState('Layout');

  return (
    <div className="flex min-h-screen bg-[#ececec] px-[2px] pt-px pb-[2px] font-[Inter,sans-serif]">
      <div className="flex min-w-0 flex-1 flex-col border border-[#b5b5b5] bg-white px-1 pt-1 pb-[5px]">
        <MenuBar />

        {/* ── Browser window behind ── */}
        <div className="flex h-[11px] bg-linear-to-r from-[#9c5759] to-[#454562] pl-12">
          <div className="flex flex-1 items-end gap-[10px] rounded-t-[5px] bg-linear-to-b from-[#f3f3f3] to-[#dfdfdf] pr-[76px] pl-[84px]">
            {ribbonTabs.map(t => <div key={t} className="h-[3px] flex-1 rounded-t-sm border border-b-0 border-[#a9a9a9] bg-[#e6e6e6]" />)}
          </div>
        </div>

        {/* ── Word window ── */}
        <div className="flex flex-1 flex-col overflow-hidden rounded-b-[5px] bg-white">
          <div className="border-b border-[#234b87] bg-linear-to-b from-[#3b64a3] to-[#2a5699]">
            <TitleBar />
            <TabRow tab={tab} setTab={setTab} />
          </div>
          <Ribbon />
          <Workspace />
          <StatusBar />
        </div>

        <Dock />
      </div>
    </div>
  );
};

export default App;
